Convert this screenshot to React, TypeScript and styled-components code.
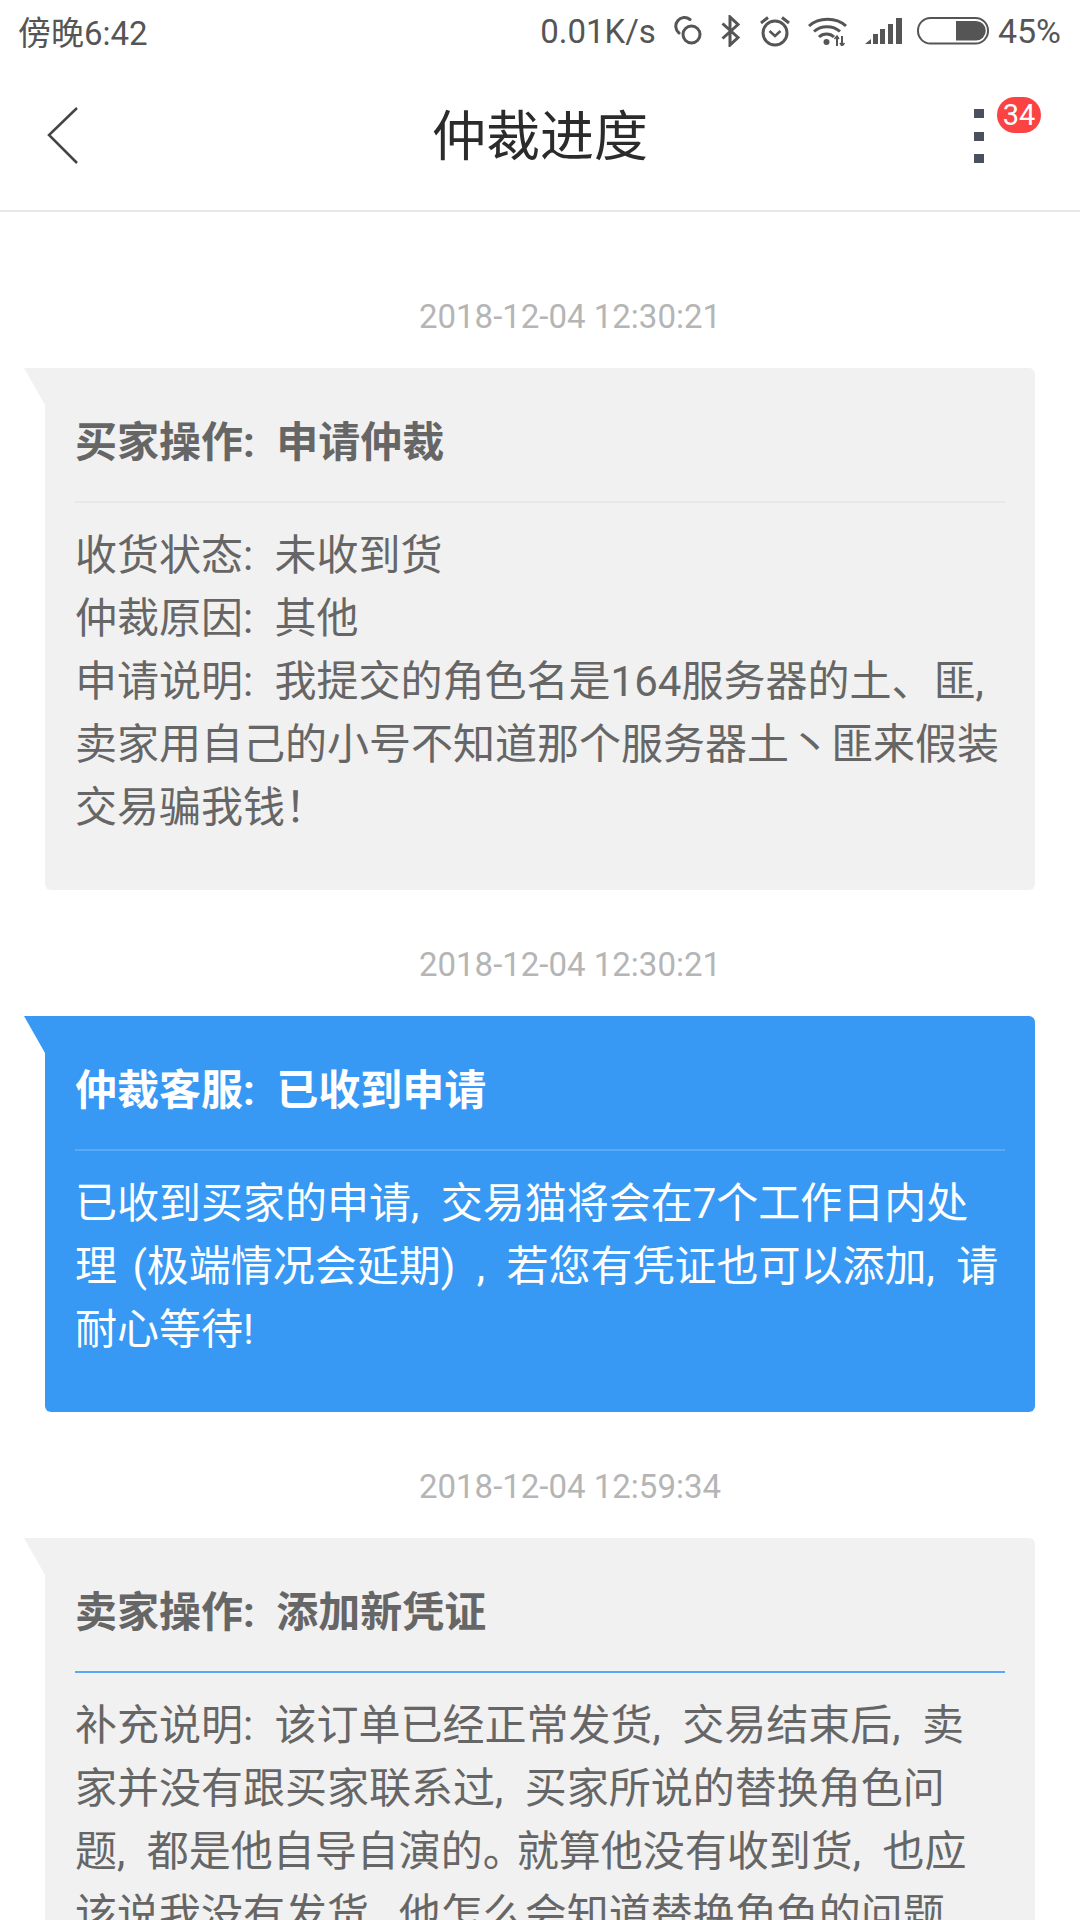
import React, { FC, ReactNode } from 'react';
import styled, { createGlobalStyle } from 'styled-components';

const FONT = `Roboto, "Noto Sans CJK SC", sans-serif`;

const GlobalStyle = createGlobalStyle`
  html, body {
    margin: 0;
    padding: 0;
    background: #fff;
  }
`;

const Page = styled.div`
  width: 1080px;
  height: 1920px;
  overflow: hidden;
  background: #fff;
  font-family: ${FONT};
`;

const StatusBar = styled.div`
  height: 62px;
  padding: 0 19px 0 18px;
  display: flex;
  align-items: center;
  justify-content: space-between;
  color: #555;
  font-size: 33px;
`;

const StatusRight = styled.div`
  display: flex;
  align-items: center;
`;

const StatusIcon = styled.svg<{ $gap: number }>`
  display: block;
  margin-left: ${(p) => p.$gap}px;
`;

const Percent = styled.span`
  margin-left: 9px;
  font-size: 34px;
`;

const Header = styled.header`
  height: 148px;
  border-bottom: 2px solid #e8e8e8;
  display: grid;
  grid-template-columns: 1fr auto 1fr;
  align-items: center;
`;

const BackButton = styled.svg`
  display: block;
  margin-left: 47px;
`;

const Title = styled.h1`
  margin: 4px 0 0;
  font-size: 54px;
  font-weight: 400;
  color: #2b2b2b;
  line-height: 1;
`;

const MenuWrap = styled.div`
  position: relative;
  justify-self: end;
  width: 106px;
  height: 54px;
  display: flex;
  flex-direction: column;
  justify-content: space-between;
`;

const MenuDot = styled.span`
  display: block;
  width: 10px;
  height: 9px;
  background: #4a505e;
`;

const Badge = styled.span`
  position: absolute;
  left: 23px;
  top: -12px;
  width: 44px;
  height: 36px;
  border-radius: 18px;
  background: #fb4343;
  color: #fff;
  font-size: 29px;
  line-height: 36px;
  text-align: center;
`;

const Timeline = styled.main`
  padding-top: 83px;
`;

const Time = styled.div`
  padding-left: 60px;
  height: 44px;
  margin-bottom: 29px;
  line-height: 44px;
  text-align: center;
  font-size: 33px;
  color: #b5b5b5;
`;

const Card = styled.section<{ $blue?: boolean }>`
  position: relative;
  margin: 0 45px 53px 45px;
  padding: 43px 30px 51px;
  border-radius: 0 6px 6px 6px;
  background: ${(p) => (p.$blue ? '#3899f5' : '#f1f1f1')};
  color: ${(p) => (p.$blue ? '#fff' : '#666')};

  &::before {
    content: '';
    position: absolute;
    left: -21px;
    top: 0;
    width: 21px;
    height: 37px;
    background: ${(p) => (p.$blue ? '#3899f5' : '#f1f1f1')};
    clip-path: polygon(0 0, 100% 0, 100% 100%);
  }
`;

const CardTitle = styled.h2<{ $line: string }>`
  margin: 0;
  padding: 0 0 27px;
  border-bottom: 2px solid ${(p) => p.$line};
  font-size: 42px;
  line-height: 63px;
  font-weight: 700;
  word-spacing: 11px;
  white-space: nowrap;
`;

const CardBody = styled.div`
  padding-top: 21px;
  font-size: 42px;
  line-height: 63px;
  word-spacing: 11px;
`;

const Line = styled.div`
  white-space: nowrap;
`;

const Tight = styled.span<{ $by: number }>`
  letter-spacing: -${(p) => p.$by}px;
`;

interface Entry {
  time: string;
  title: string;
  lines: ReactNode[];
  blue?: boolean;
  line: string;
}

const ENTRIES: Entry[] = [
  {
    time: '2018-12-04 12:30:21',
    title: '买家操作: 申请仲裁',
    line: '#e8e8e8',
    lines: [
      '收货状态: 未收到货',
      '仲裁原因: 其他',
      '申请说明: 我提交的角色名是164服务器的土、匪,',
      '卖家用自己的小号不知道那个服务器土丶匪来假装',
      '交易骗我钱！'
    ]
  },
  {
    time: '2018-12-04 12:30:21',
    title: '仲裁客服: 已收到申请',
    blue: true,
    line: '#5aaaf7',
    lines: [
      '已收到买家的申请, 交易猫将会在7个工作日内处',
      <>
        <Tight $by={6}>理</Tight> (极端情况会延期) , 若您有凭证也可以添加, 请
      </>,
      '耐心等待!'
    ]
  },
  {
    time: '2018-12-04 12:59:34',
    title: '卖家操作: 添加新凭证',
    line: '#5aa8f5',
    lines: [
      '补充说明: 该订单已经正常发货, 交易结束后, 卖',
      '家并没有跟买家联系过, 买家所说的替换角色问',
      <>
        题, 都是他自导自演的<Tight $by={8}>。</Tight>就算他没有收到货, 也应
      </>,
      '该说我没有发货, 他怎么会知道替换角色的问题'
    ]
  }
];

const SyncIcon: FC = () => (
  <StatusIcon $gap={17} width="30" height="30" viewBox="0 0 30 30" fill="none" stroke="#555" strokeWidth="3">
    <circle cx="18.5" cy="18.5" r="8.5" />
    <path d="M6 17 A8.5 8.5 0 0 1 17 3.5" strokeLinecap="round" />
  </StatusIcon>
);

const BluetoothIcon: FC = () => (
  <StatusIcon $gap={18} width="20" height="32" viewBox="0 0 20 32" fill="none" stroke="#555" strokeWidth="3">
    <path d="M1.5 8.5 L17 22.5 L9 30 V2 L17 9.5 L1.5 23.5" />
  </StatusIcon>
);

const AlarmIcon: FC = () => (
  <StatusIcon $gap={18} width="32" height="32" viewBox="0 0 32 32" fill="none" stroke="#555" strokeWidth="3">
    <circle cx="16" cy="18" r="12" />
    <path d="M10.5 16 L16 21 L21.5 16" strokeWidth="2.5" />
    <path d="M2 8 L9 2.5 M30 8 L23 2.5" strokeWidth="3" />
  </StatusIcon>
);

const WifiIcon: FC = () => (
  <StatusIcon $gap={17} width="40" height="30" viewBox="0 0 40 30" fill="none" stroke="#555" strokeWidth="3">
    <path d="M1 10 C11 1 28 1 38 10" />
    <path d="M6 15.5 C13 9 25 9 32 15.5" />
    <path d="M11 21 C15 17 22 17 26 21" />
    <circle cx="18.5" cy="26" r="3" fill="#555" stroke="none" />
    <path d="M29 30 V20 M34 20 V30" strokeWidth="2" />
    <path d="M26.5 23 L29 20 L31 23 M32 27 L34 30 L36.5 27" strokeWidth="1.5" />
  </StatusIcon>
);

const SignalIcon: FC = () => (
  <StatusIcon $gap={17} width="37" height="26" viewBox="0 0 37 26" fill="#555">
    <polygon points="0,26 6,21 6,26" />
    <rect x="8" y="16" width="5" height="10" />
    <rect x="15" y="11" width="5" height="15" />
    <rect x="23" y="6" width="5" height="20" />
    <rect x="31" y="0" width="6" height="26" />
  </StatusIcon>
);

const BatteryIcon: FC = () => (
  <StatusIcon $gap={15} width="72" height="28" viewBox="0 0 72 28" fill="none">
    <rect x="1" y="1" width="70" height="25.5" rx="12.5" stroke="#555" strokeWidth="2" />
    <path d="M39 4 H59 A9.7 9.7 0 0 1 59 23.5 H39 Z" fill="#555" />
  </StatusIcon>
);

const App: FC = () => (
  <Page>
    <GlobalStyle />
    <StatusBar>
      <span>傍晚6:42</span>
      <StatusRight>
        <span>0.01K/s</span>
        <SyncIcon />
        <BluetoothIcon />
        <AlarmIcon />
        <WifiIcon />
        <SignalIcon />
        <BatteryIcon />
        <Percent>45%</Percent>
      </StatusRight>
    </StatusBar>
    <Header>
      <BackButton width="32" height="58" viewBox="0 0 32 58" fill="none" stroke="#444" strokeWidth="2.5">
        <path d="M30 1 L2 28 L30 56" />
      </BackButton>
      <Title>仲裁进度</Title>
      <MenuWrap>
        <MenuDot />
        <MenuDot />
        <MenuDot />
        <Badge>34</Badge>
      </MenuWrap>
    </Header>
    <Timeline>
      {ENTRIES.map((entry) => (
        <React.Fragment key={entry.title}>
          <Time>{entry.time}</Time>
          <Card $blue={entry.blue}>
            <CardTitle $line={entry.line}>{entry.title}</CardTitle>
            <CardBody>
              {entry.lines.map((text, i) => (
                <Line key={i}>{text}</Line>
              ))}
            </CardBody>
          </Card>
        </React.Fragment>
      ))}
    </Timeline>
  </Page>
);

export default App;
